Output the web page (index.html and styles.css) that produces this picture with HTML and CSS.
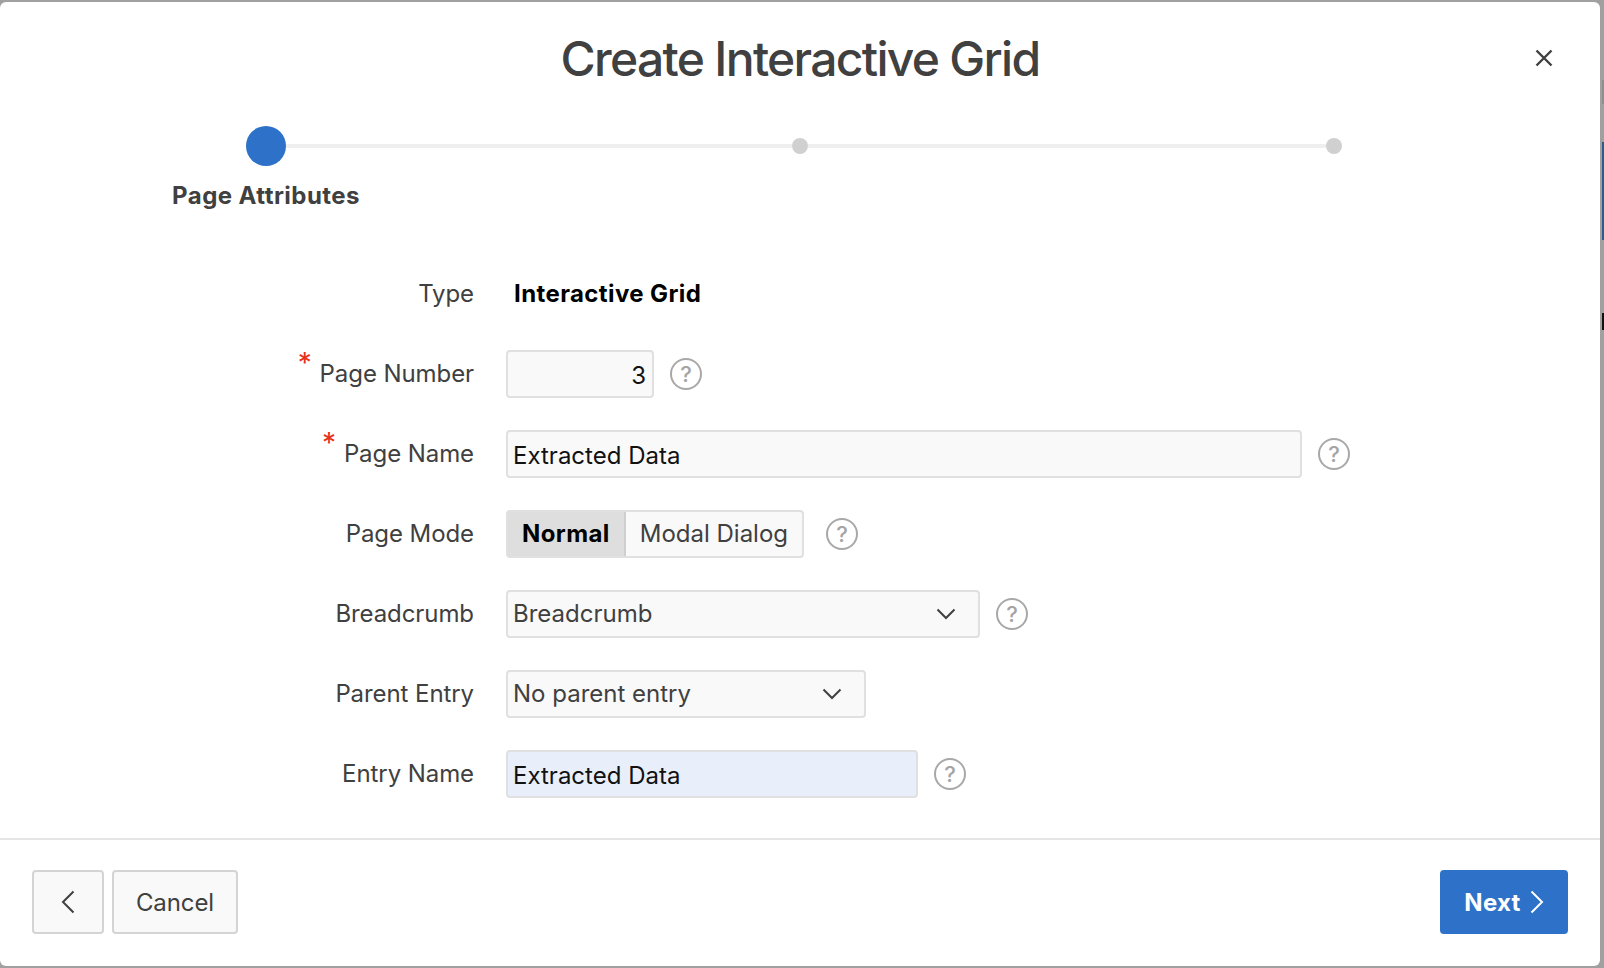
FILE: index.html
```html
<!DOCTYPE html>
<html lang="en">
<head>
<meta charset="utf-8">
<title>Create Interactive Grid</title>
<link rel="stylesheet" href="styles.css">
</head>
<body>
<main class="modal">
  <header class="head">
    <h1 class="title">Create Interactive Grid</h1>
    <button class="close" aria-label="Close"><svg width="18" height="18" viewBox="0 0 18 18"><path d="M1.5 1.5L16.5 16.5M16.5 1.5L1.5 16.5" stroke="#404040" stroke-width="2.4" fill="none"/></svg></button>
  </header>
  <section class="stepper">
    <div class="track">
      <span class="step-on"></span><span class="seg seg-a"></span><span class="dot"></span><span class="seg seg-b"></span><span class="dot"></span>
    </div>
    <div class="step-label">Page Attributes</div>
  </section>
  <form class="form">
    <div class="row"><div class="label">Type</div><div class="static">Interactive Grid</div></div>
    <div class="row"><div class="label"><span class="req">*</span>Page Number</div><div class="field w-num num">3</div><span class="help">?</span></div>
    <div class="row"><div class="label"><span class="req">*</span>Page Name</div><div class="field w-name">Extracted Data</div><span class="help">?</span></div>
    <div class="row"><div class="label">Page Mode</div><div class="toggle"><span class="opt opt-on">Normal</span><span class="opt">Modal Dialog</span></div><span class="help">?</span></div>
    <div class="row"><div class="label">Breadcrumb</div><div class="field select w-crumb"><span class="val">Breadcrumb</span><svg class="chev" width="20" height="12" viewBox="0 0 20 12"><path d="M1.5 1.5L10 10L18.5 1.5" stroke="#404040" stroke-width="2" fill="none"/></svg></div><span class="help">?</span></div>
    <div class="row"><div class="label">Parent Entry</div><div class="field select w-parent"><span class="val">No parent entry</span><svg class="chev" width="20" height="12" viewBox="0 0 20 12"><path d="M1.5 1.5L10 10L18.5 1.5" stroke="#404040" stroke-width="2" fill="none"/></svg></div></div>
    <div class="row"><div class="label">Entry Name</div><div class="field w-entry filled">Extracted Data</div><span class="help">?</span></div>
  </form>
  <footer class="foot">
    <div class="foot-left">
      <button class="btn btn-back" aria-label="Back"><svg width="14" height="24" viewBox="0 0 14 24"><path d="M12.5 1.5L2 12L12.5 22.5" stroke="#404040" stroke-width="2" fill="none"/></svg></button>
      <button class="btn btn-cancel">Cancel</button>
    </div>
    <button class="btn-next">Next<svg width="14" height="24" viewBox="0 0 14 24"><path d="M1.5 1.5L12 12L1.5 22.5" stroke="#fff" stroke-width="2" fill="none"/></svg></button>
  </footer>
</main>
<aside class="edge"><i class="edge-a"></i><i class="edge-b"></i><i class="edge-c"></i></aside>
</body>
</html>
```
FILE: styles.css
```css
* { box-sizing: border-box; }
html, body { margin: 0; height: 968px; overflow: hidden; }
body { display: flex; background: #a0a0a0; padding: 2px 0; font-family: Inter, "Liberation Sans", sans-serif; color: #404040; }
.modal { width: 1600px; height: 964px; background: #fff; border-radius: 6px; display: flex; flex-direction: column; }
.head { height: 116px; display: flex; justify-content: center; position: relative; }
.title { margin: 27px 0 0; font-size: 48px; line-height: 60px; font-weight: 500; letter-spacing: -1.7px; color: #404040; }
.close { position: absolute; left: 1535px; top: 47px; width: 18px; height: 18px; padding: 0; border: 0; background: none; display: flex; }
.stepper { height: 152px; padding: 8px 0 0 172px; }
.track { display: flex; align-items: center; margin-left: 74px; height: 40px; }
.step-on { width: 40px; height: 40px; border-radius: 50%; background: #2d72c8; }
.seg { height: 4px; background: #efefef; }
.seg-a { width: 506px; }
.seg-b { width: 518px; }
.dot { width: 16px; height: 16px; border-radius: 50%; background: #d0d0d0; }
.step-label { width: 188px; margin-top: 15px; text-align: center; font-size: 24px; line-height: 30px; font-weight: 700; letter-spacing: 0.45px; white-space: nowrap; }
.form { display: flex; flex-direction: column; gap: 32px; height: 568px; }
.row { display: flex; align-items: center; height: 48px; }
.label { width: 474px; text-align: right; font-size: 24px; line-height: 30px; letter-spacing: -0.08px; white-space: nowrap; margin-right: 32px; }
.req { color: #e8301c; font-size: 28px; line-height: 0; margin-right: 8px; position: relative; top: -9px; }
.static { margin-left: 8px; padding-bottom: 2px; font-size: 24px; font-weight: 700; letter-spacing: 0.4px; color: #000; }
.field { height: 48px; background: #f9f9f9; border: 2px solid #e0e0e0; border-radius: 4px; padding: 1px 5px 0; font-size: 24px; line-height: 46px; color: #111; white-space: nowrap; }
.num { text-align: right; padding-right: 6px; }
.w-num { width: 148px; }
.w-name { width: 796px; }
.w-crumb { width: 474px; }
.w-parent { width: 360px; }
.w-entry { width: 412px; }
.filled { background: #e8effb; }
.select { display: flex; align-items: center; justify-content: space-between; color: #404040; padding: 0 22px 0 5px; }
.chev { flex: none; }
.help { width: 32px; height: 32px; margin-left: 16px; border: 2px solid #a8a8a8; border-radius: 50%; color: #a4a4a4; font-size: 22px; font-weight: 500; line-height: 28px; text-align: center; }
.toggle { display: flex; height: 48px; margin-right: 6px; border: 2px solid #e0e0e0; border-radius: 4px; background: #f9f9f9; font-size: 24px; }
.opt { padding: 0 14px; line-height: 44px; white-space: nowrap; }
.opt-on { background: #dedede; font-weight: 700; letter-spacing: 0.4px; color: #000; border-right: 2px solid #cfcfcf; }
.foot { flex: 1; border-top: 2px solid #e5e5e5; padding: 30px 32px 0; display: flex; justify-content: space-between; align-items: flex-start; }
.foot-left { display: flex; gap: 8px; }
.btn { height: 64px; background: #f9f9f9; border: 2px solid #d4d4d4; border-radius: 4px; font-family: inherit; font-size: 24px; letter-spacing: -0.1px; color: #404040; display: flex; align-items: center; justify-content: center; padding: 0; }
.btn-back { width: 72px; }
.btn-cancel { width: 126px; }
.btn-next { width: 128px; height: 64px; background: #2d72c8; border: 0; border-radius: 4px; color: #fff; font-family: inherit; font-size: 24px; font-weight: 700; letter-spacing: 0.3px; display: flex; align-items: center; justify-content: center; gap: 9px; padding: 0; }
.edge { width: 4px; display: flex; flex-direction: column; padding: 78px 0 0 2px; }
.edge i { display: block; width: 2px; }
.edge-a { height: 24px; background: #8e8e8e; }
.edge-b { height: 98px; margin-top: 38px; background: #2a5d8c; }
.edge-c { height: 17px; margin-top: 73px; background: #111; }
```
